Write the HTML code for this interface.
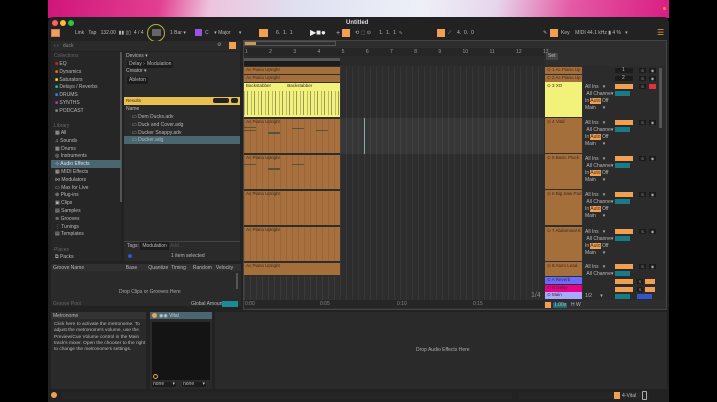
<!DOCTYPE html>
<html><head><meta charset="utf-8"><style>
*{margin:0;padding:0;box-sizing:border-box}
body{width:717px;height:402px;overflow:hidden;background:#000;font-family:"Liberation Sans",sans-serif;font-size:5px;color:#b8b8b8;position:relative}
div{position:absolute}
.t{white-space:nowrap;line-height:1}
.tk{background:#a56f3c}
.hd{font-size:4.5px;color:#3a2a1a}
.sb{width:7px;height:5px;background:#1c1c1c;color:#aaa;font-size:4px;text-align:center;line-height:5px}
</style></head><body>
<div style="left:48px;top:0;width:621px;height:18px;background:linear-gradient(100deg,#d0157a 0%,#e23f91 18%,#eec3dd 26%,#dfe0f0 40%,#eef0f8 60%,#e6d6ec 72%,#e45aa5 84%,#d81d82 100%)"></div>
<div style="left:663px;top:7px;width:3px;height:3px;border-radius:50%;background:#ff8a3d"></div>
<div style="left:48px;top:17px;width:621px;height:385px;background:#222;border-radius:5px 5px 0 0"></div>
<div style="left:52px;top:20px;width:6px;height:6px;border-radius:50%;background:#ff5f57"></div>
<div style="left:60px;top:20px;width:6px;height:6px;border-radius:50%;background:#febc2e"></div>
<div style="left:68px;top:20px;width:6px;height:6px;border-radius:50%;background:#28c840"></div>
<div class="t" style="left:346px;top:20px;font-size:6px;font-weight:bold;color:#ddd">Untitled</div>
<div style="left:51px;top:29px;width:9px;height:8px;background:#f0a050;border:1px solid #c77"></div>
<div class="t" style="left:75px;top:31px">Link &nbsp;&nbsp;Tap &nbsp;&nbsp;132.00 &nbsp;▮▮ ▯▯ &nbsp;4 / 4</div>
<div style="left:147px;top:24px;width:18px;height:18px;border-radius:50%;border:1.5px solid #b8b040"></div>
<div style="left:152px;top:29px;width:9px;height:7px;background:#666"></div>
<div class="t" style="left:170px;top:31px">1 Bar ▾</div>
<div style="left:195px;top:29px;width:7px;height:7px;background:#9a55e0"></div>
<div class="t" style="left:205px;top:31px">C &nbsp;&nbsp;&nbsp;▾ Major &nbsp;&nbsp;&nbsp;&nbsp;&nbsp;▾</div>
<div style="left:259px;top:29px;width:9px;height:8px;background:#f0a050"></div>
<div class="t" style="left:276px;top:31px">6. &nbsp;1. &nbsp;1</div>
<div class="t" style="left:310px;top:29px;font-size:8px;color:#eee">▶■●</div>
<div class="t" style="left:336px;top:30px;font-size:7px">+</div>
<div style="left:342px;top:29px;width:8px;height:8px;background:#f0a050"></div>
<div class="t" style="left:355px;top:31px">⟲ ⬚ ⊙ &nbsp;&nbsp;&nbsp;&nbsp;&nbsp;1. &nbsp;1. &nbsp;1 &nbsp;∿</div>
<div style="left:437px;top:29px;width:8px;height:8px;background:#f0a050"></div>
<div class="t" style="left:448px;top:31px">⟋ &nbsp;&nbsp;&nbsp;4. &nbsp;0. &nbsp;0</div>
<div style="left:550px;top:29px;width:8px;height:8px;background:#f0a050"></div>
<div class="t" style="left:543px;top:31px">✎</div>
<div class="t" style="left:561px;top:31px">Key &nbsp;&nbsp;&nbsp;MIDI 44.1 kHz ▮ 4 % &nbsp;&nbsp;▾</div>
<div class="t" style="left:657px;top:29px;font-size:8px;color:#f0a050">☰</div>
<div style="left:51px;top:41px;width:190px;height:10px;background:#2a2a2a"></div>
<div class="t" style="left:54px;top:44px;color:#888">‹ › &nbsp;&nbsp;duck</div>
<div class="t" style="left:217px;top:43px;color:#999">⚙</div>
<div style="left:229px;top:42px;width:7px;height:7px;background:#f0a050"></div>
<div style="left:51px;top:52px;width:70px;height:209px;background:#262626"></div>
<div style="left:120px;top:52px;width:2px;height:150px;background:#555"></div>
<div class="t" style="left:54px;top:54px;color:#666">Collections</div>
<div style="left:55px;top:61px;line-height:7.8px;font-size:5px" class="t">
<span style="color:#e22">■</span> EQ<br><span style="color:#f07a20">■</span> Dynamics<br><span style="color:#ee3">■</span> Saturators<br><span style="color:#2c9">■</span> Delays / Reverbs<br><span style="color:#38f">■</span> DRUMS<br><span style="color:#a3e">■</span> SYNTHS<br><span style="color:#888">■</span> PODCAST</div>
<div class="t" style="left:54px;top:124px;color:#666">Library</div>
<div style="left:51px;top:160px;width:70px;height:8px;background:#4a6670"></div>
<div style="left:55px;top:130px;line-height:7.8px" class="t">▦ All<br>♫ Sounds<br>▦ Drums<br>◎ Instruments<br><span style="color:#dde">⊹ Audio Effects</span><br>▦ MIDI Effects<br>⋈ Modulators<br>▭ Max for Live<br>⊕ Plug-ins<br>▣ Clips<br>▤ Samples<br>≋ Grooves<br>⋮ Tunings<br>▤ Templates</div>
<div class="t" style="left:54px;top:248px;color:#666">Places</div>
<div class="t" style="left:55px;top:255px">⧉ Packs</div>
<div style="left:124px;top:52px;width:116px;height:209px;background:#2a2a2a"></div>
<div class="t" style="left:126px;top:54px">Devices ▾</div>
<div class="t" style="left:127px;top:61px;background:#1c1c1c;padding:1px 2px">Delay ›</div>
<div class="t" style="left:145px;top:61px;background:#1c1c1c;padding:1px 2px">Modulation</div>
<div class="t" style="left:126px;top:69px">Creator ▾</div>
<div class="t" style="left:127px;top:77px;background:#1c1c1c;padding:1px 2px">Ableton</div>
<div style="left:124px;top:97px;width:116px;height:8px;background:#e8c050"></div>
<div class="t hd" style="left:126px;top:99px">Results</div>
<div style="left:213px;top:98px;width:16px;height:5px;background:#222;border-radius:2px"></div>
<div style="left:231px;top:98px;width:7px;height:5px;background:#222;border-radius:2px"></div>
<div class="t" style="left:126px;top:107px">Name</div>
<div style="left:124px;top:136px;width:116px;height:8px;background:#4a6670"></div>
<div class="t" style="left:132px;top:114px;line-height:7.8px">▭ Dem Ducks.adv<br>▭ Duck and Cover.adg<br>▭ Ducker Snappy.adv<br>▭ Ducker.adg</div>
<div style="left:124px;top:241px;width:116px;height:1px;background:#444"></div>
<div class="t" style="left:127px;top:244px">Tags: <span style="background:#1c1c1c;padding:1px 2px">Modulation</span> <span style="color:#555">Add...</span></div>
<div style="left:128px;top:254px;width:4px;height:4px;border-radius:50%;background:#35c"></div>
<div class="t" style="left:171px;top:254px">1 item selected</div>
<div style="left:51px;top:264px;width:190px;height:42px;background:#2a2a2a"></div>
<div style="left:51px;top:264px;width:190px;height:7px;background:#303030"></div>
<div class="t" style="left:53px;top:266px">Groove Name &nbsp;&nbsp;&nbsp;&nbsp;&nbsp;&nbsp;&nbsp;&nbsp;&nbsp;&nbsp;&nbsp;&nbsp;&nbsp;&nbsp;&nbsp;&nbsp;&nbsp;&nbsp;&nbsp;&nbsp;&nbsp;&nbsp;&nbsp;&nbsp;&nbsp;&nbsp;&nbsp;&nbsp;&nbsp;Base &nbsp;&nbsp;&nbsp;&nbsp;&nbsp;&nbsp;&nbsp;Quantize &nbsp;Timing &nbsp;&nbsp;&nbsp;&nbsp;Random &nbsp;&nbsp;Velocity</div>
<div style="left:236px;top:273px;width:2px;height:16px;background:#555"></div>
<div class="t" style="left:119px;top:290px;color:#aaa">Drop Clips or Grooves Here</div>
<div class="t" style="left:53px;top:302px;color:#666">Groove Pool</div>
<div class="t" style="left:191px;top:302px">Global Amount</div>
<div style="left:222px;top:301px;width:16px;height:6px;background:#1a8a95"></div>
<div style="left:243px;top:40px;width:424px;height:270px;background:#2e2e2e;border:1px solid #444"></div>
<div style="left:244px;top:42px;width:12px;height:4px;background:#c89a50"></div>
<div style="left:244px;top:41px;width:92px;height:5px;border:1px solid #555"></div>
<div style="left:244px;top:48px;width:300px;height:8px;background:#262626"></div>
<div class="t" style="left:245px;top:50px;color:#999;word-spacing:20px">1 2 3 4 5 6 7 8 9 10 11 12 13</div>
<div style="left:244px;top:56px;width:300px;height:10px;background:#2a2a2a"></div>
<div style="left:244px;top:58px;width:96px;height:3px;background:#555"></div>
<div style="left:244px;top:61px;width:96px;height:5px;background:#1c1c1c"></div>
<div style="left:340px;top:66px;width:204px;height:234px;background:repeating-linear-gradient(90deg,#363636 0 1px,#2d2d2d 1px 6px)"></div>
<div style="left:340px;top:118px;width:204px;height:36px;background:rgba(255,255,255,0.05)"></div>
<div style="left:364px;top:118px;width:1px;height:36px;background:#8aa"></div>
<div class="tk" style="left:244px;top:67px;width:96px;height:7px"></div><div class="t hd" style="left:246px;top:68px">Ac Piano Upright</div>
<div class="tk" style="left:244px;top:75px;width:96px;height:7px"></div><div class="t hd" style="left:246px;top:76px">Ac Piano Upright</div>
<div style="left:244px;top:83px;width:96px;height:34px;background:#f2f27a"></div>
<div style="left:244px;top:91px;width:96px;height:24px;background:repeating-linear-gradient(90deg,#bbb86a 0 1px,transparent 1px 3px,#99985a 3px 4px,transparent 4px 7px)"></div>
<div class="t hd" style="left:246px;top:84px">Backstabber &nbsp;&nbsp;&nbsp;&nbsp;&nbsp;&nbsp;&nbsp;&nbsp;&nbsp;&nbsp;&nbsp;&nbsp;Backstabber</div>
<div class="tk" style="left:244px;top:119px;width:96px;height:34px;background:repeating-linear-gradient(90deg,#9a6636 0 1px,#a8703e 1px 6px)"></div><div class="t hd" style="left:246px;top:120px">Ac Piano Upright</div>
<div class="tk" style="left:244px;top:155px;width:96px;height:34px;background:repeating-linear-gradient(90deg,#9a6636 0 1px,#a8703e 1px 6px)"></div><div class="t hd" style="left:246px;top:156px">Ac Piano Upright</div>
<div class="tk" style="left:244px;top:191px;width:96px;height:34px;background:repeating-linear-gradient(90deg,#9a6636 0 1px,#a8703e 1px 6px)"></div><div class="t hd" style="left:246px;top:192px">Ac Piano Upright</div>
<div class="tk" style="left:244px;top:227px;width:96px;height:34px;background:repeating-linear-gradient(90deg,#9a6636 0 1px,#a8703e 1px 6px)"></div><div class="t hd" style="left:246px;top:228px">Ac Piano Upright</div>
<div class="tk" style="left:244px;top:263px;width:96px;height:12px"></div><div class="t hd" style="left:246px;top:264px">Ac Piano Upright</div>
<div style="left:244px;top:276px;width:96px;height:24px;background:repeating-linear-gradient(90deg,#3a3a3a 0 1px,#2f2f2f 1px 6px)"></div>
<div style="left:244px;top:127px;width:12px;height:1px;background:#553"></div>
<div style="left:244px;top:130px;width:12px;height:1px;background:#553"></div>
<div style="left:268px;top:132px;width:12px;height:2px;background:#553"></div>
<div style="left:292px;top:128px;width:12px;height:1px;background:#553"></div>
<div style="left:316px;top:130px;width:12px;height:1px;background:#553"></div>
<div style="left:244px;top:164px;width:12px;height:1px;background:#553"></div>
<div style="left:268px;top:168px;width:12px;height:2px;background:#553"></div>
<div style="left:292px;top:164px;width:12px;height:1px;background:#553"></div>
<div style="left:244px;top:300px;width:300px;height:8px;background:#262626"></div>
<div class="t" style="left:245px;top:302px;color:#888">0:00</div>
<div class="t" style="left:320px;top:302px;color:#888">0:05</div>
<div class="t" style="left:397px;top:302px;color:#888">0:10</div>
<div class="t" style="left:473px;top:302px;color:#888">0:15</div>
<div class="t" style="left:531px;top:292px;font-size:7px;color:#888">1/4</div>
<div class="t" style="left:546px;top:53px;background:#444;padding:1px 2px">Set</div>
<div class="tk" style="left:545px;top:67px;width:37px;height:7px"></div><div class="t hd" style="left:547px;top:68px">⊙ 1 Ac Piano Up</div>
<div class="tk" style="left:545px;top:75px;width:37px;height:7px"></div><div class="t hd" style="left:547px;top:76px">⊙ 2 Ac Piano Up</div>
<div style="left:545px;top:82px;width:37px;height:35px;background:#f2f27a"></div><div class="t hd" style="left:547px;top:84px">⊙ 3 XO</div>
<div class="tk" style="left:545px;top:118px;width:37px;height:35px"></div><div class="t hd" style="left:547px;top:120px">⊙ 4 Vital</div>
<div class="tk" style="left:545px;top:154px;width:37px;height:35px"></div><div class="t hd" style="left:547px;top:156px">⊙ 5 Basic Pluck</div>
<div class="tk" style="left:545px;top:190px;width:37px;height:35px"></div><div class="t hd" style="left:547px;top:192px">⊙ 6 Big Saw Pad</div>
<div class="tk" style="left:545px;top:227px;width:37px;height:34px"></div><div class="t hd" style="left:547px;top:229px">⊙ 7 Abdominal 8</div>
<div class="tk" style="left:545px;top:262px;width:37px;height:14px"></div><div class="t hd" style="left:547px;top:264px">⊙ 8 Atom Lead</div>
<div style="left:545px;top:277px;width:37px;height:7px;background:#6b6bff"></div><div class="t hd" style="left:547px;top:278px">⊙ A Reverb</div>
<div style="left:545px;top:285px;width:37px;height:7px;background:#e8008c"></div><div class="t hd" style="left:547px;top:286px">⊙ B Delay</div>
<div style="left:545px;top:292px;width:37px;height:7px;background:#a8a8ff"></div><div class="t hd" style="left:547px;top:293px">⊙ Main</div>
<div style="left:545px;top:302px;width:6px;height:6px;background:#f0a050"></div>
<div class="t" style="left:553px;top:303px;background:#1a6a75;padding:0 1px">1.00x</div>
<div class="t" style="left:571px;top:303px">H W</div>
<div style="left:583px;top:66px;width:82px;height:234px;background:#2b2b2b"></div>
<div style="left:615px;top:68px;width:18px;height:5px;background:#1c1c1c"></div>
<div style="left:615px;top:76px;width:18px;height:5px;background:#1c1c1c"></div>
<div class="t" style="left:622px;top:68px">1</div><div class="t" style="left:622px;top:76px">2</div>
<div class="sb" style="left:639px;top:68px">S</div><div class="sb" style="left:649px;top:68px">◉</div>
<div class="sb" style="left:639px;top:76px">S</div><div class="sb" style="left:649px;top:76px">◉</div>
<div class="sb" style="left:639px;top:84px">S</div>
<div class="sb" style="left:639px;top:120px">S</div><div class="sb" style="left:649px;top:120px">◉</div>
<div class="sb" style="left:639px;top:156px">S</div><div class="sb" style="left:649px;top:156px">◉</div>
<div class="sb" style="left:639px;top:192px">S</div><div class="sb" style="left:649px;top:192px">◉</div>
<div class="sb" style="left:639px;top:229px">S</div><div class="sb" style="left:649px;top:229px">◉</div>
<div class="sb" style="left:639px;top:264px">S</div><div class="sb" style="left:649px;top:264px">◉</div>
<div class="sb" style="left:637px;top:279px;width:6px">S</div>
<div class="sb" style="left:637px;top:287px;width:6px">S</div>
<div style="left:615px;top:84px;width:18px;height:5px;background:#f0a050"></div>
<div style="left:615px;top:91px;width:15px;height:5px;background:#1a7a85"></div>
<div style="left:649px;top:84px;width:7px;height:5px;background:#e03040"></div>
<div style="left:615px;top:120px;width:18px;height:5px;background:#f0a050"></div>
<div style="left:615px;top:127px;width:15px;height:5px;background:#1a7a85"></div>
<div style="left:615px;top:156px;width:18px;height:5px;background:#f0a050"></div>
<div style="left:615px;top:163px;width:15px;height:5px;background:#1a7a85"></div>
<div style="left:615px;top:192px;width:18px;height:5px;background:#f0a050"></div>
<div style="left:615px;top:199px;width:15px;height:5px;background:#1a7a85"></div>
<div style="left:615px;top:229px;width:18px;height:5px;background:#f0a050"></div>
<div style="left:615px;top:236px;width:15px;height:5px;background:#1a7a85"></div>
<div style="left:615px;top:264px;width:18px;height:5px;background:#f0a050"></div>
<div style="left:615px;top:271px;width:15px;height:5px;background:#1a7a85"></div>
<div style="left:615px;top:279px;width:18px;height:5px;background:#f0a050"></div>
<div style="left:615px;top:287px;width:18px;height:5px;background:#f0a050"></div>
<div style="left:615px;top:294px;width:15px;height:5px;background:#1a7a85"></div>
<div style="left:637px;top:294px;width:15px;height:5px;background:#3355cc"></div>
<div style="left:645px;top:279px;width:10px;height:5px;background:#f0a050"></div>
<div style="left:645px;top:287px;width:10px;height:5px;background:#f0a050"></div>
<div class="t" style="left:585px;top:84px;line-height:7px">All Ins &nbsp;&nbsp;▾<br>&nbsp;All Channe▾<br>In <span style="background:#f0a050;color:#333">Auto</span> Off<br>Main &nbsp;&nbsp;&nbsp;&nbsp;▾</div>
<div class="t" style="left:585px;top:120px;line-height:7px">All Ins &nbsp;&nbsp;▾<br>&nbsp;All Channe▾<br>In <span style="background:#f0a050;color:#333">Auto</span> Off<br>Main &nbsp;&nbsp;&nbsp;&nbsp;▾</div>
<div class="t" style="left:585px;top:156px;line-height:7px">All Ins &nbsp;&nbsp;▾<br>&nbsp;All Channe▾<br>In <span style="background:#f0a050;color:#333">Auto</span> Off<br>Main &nbsp;&nbsp;&nbsp;&nbsp;▾</div>
<div class="t" style="left:585px;top:192px;line-height:7px">All Ins &nbsp;&nbsp;▾<br>&nbsp;All Channe▾<br>In <span style="background:#f0a050;color:#333">Auto</span> Off<br>Main &nbsp;&nbsp;&nbsp;&nbsp;▾</div>
<div class="t" style="left:585px;top:229px;line-height:7px">All Ins &nbsp;&nbsp;▾<br>&nbsp;All Channe▾<br>In <span style="background:#f0a050;color:#333">Auto</span> Off<br>Main &nbsp;&nbsp;&nbsp;&nbsp;▾</div>
<div class="t" style="left:585px;top:264px;line-height:7px">All Ins &nbsp;&nbsp;▾<br>&nbsp;All Channe▾</div>
<div class="t" style="left:585px;top:294px">1/2 &nbsp;&nbsp;&nbsp;&nbsp;&nbsp;▾</div>
<div style="left:659px;top:68px;width:3px;height:60px;background:#555"></div>
<div style="left:51px;top:312px;width:95px;height:77px;background:#2a2a2a"></div>
<div style="left:51px;top:312px;width:95px;height:7px;background:#333"></div>
<div class="t" style="left:53px;top:314px">Metronome</div>
<div style="left:54px;top:322px;font-size:4.8px;line-height:6.3px;width:92px">Click here to activate the metronome. To adjust the metronome's volume, use the Preview/Cue Volume control in the Main track's mixer. Open the chooser to the right to change the metronome's settings.</div>
<div style="left:150px;top:312px;width:62px;height:77px;background:#2a2a2a"></div>
<div style="left:150px;top:312px;width:62px;height:7px;background:#4a6670"></div>
<div style="left:152px;top:313px;width:5px;height:5px;border-radius:50%;background:#f0a050"></div>
<div class="t" style="left:159px;top:314px;color:#ccc">◉◉ Vital</div>
<div style="left:152px;top:322px;width:58px;height:58px;background:#141414"></div>
<div style="left:153px;top:374px;width:5px;height:5px;border-radius:50%;border:1px solid #f0a050"></div>
<div class="t" style="left:152px;top:382px;background:#1c1c1c;padding:0 1px">none &nbsp;&nbsp;&nbsp;&nbsp;&nbsp;▾</div>
<div class="t" style="left:182px;top:382px;background:#1c1c1c;padding:0 1px">none &nbsp;&nbsp;&nbsp;&nbsp;&nbsp;▾</div>
<div style="left:215px;top:312px;width:452px;height:77px;background:#2a2a2a"></div>
<div class="t" style="left:416px;top:348px;color:#aaa">Drop Audio Effects Here</div>
<div style="left:51px;top:392px;width:6px;height:6px;border-radius:50%;background:#f0a050"></div>
<div style="left:62px;top:392px;width:450px;height:7px;background:#262626"></div>
<div style="left:519px;top:392px;width:130px;height:7px;background:#262626"></div>
<div style="left:614px;top:392px;width:6px;height:7px;background:#f0a050"></div>
<div class="t" style="left:622px;top:394px">4-Vital</div>
<div style="left:642px;top:391px;width:5px;height:9px;border:1px solid #aaa;border-radius:1px"></div>
</body></html>
